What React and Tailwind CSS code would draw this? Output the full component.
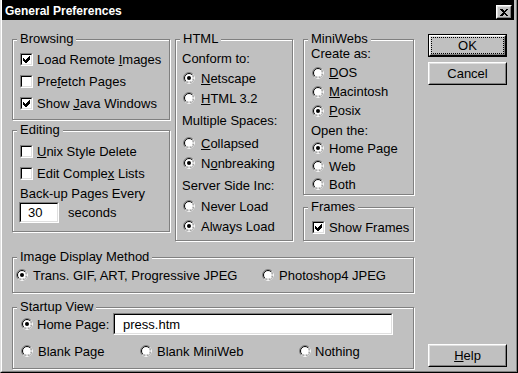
const Check = ({ checked }) => (
  <span className="flex h-[13px] w-[13px] shrink-0 border border-t-[#808080] border-l-[#808080] border-r-white border-b-white">
    <span className="flex h-full w-full items-center justify-center border border-t-black border-l-black border-r-[#dfdfdf] border-b-[#dfdfdf] bg-white">
      {checked && (
        <svg width="7" height="7" viewBox="0 0 7 7" shapeRendering="crispEdges">
          <polygon points="0,2 2,4 6,0 7,0 7,3 3,7 2,7 0,5" fill="#000" />
        </svg>
      )}
    </span>
  </span>
)

const Radio = ({ checked }) => (
  <svg width="12" height="12" viewBox="0 0 12 12" className="shrink-0">
    <circle cx="6" cy="6" r="5.5" fill="none" stroke="#808080" />
    <path d="M9.89 2.11A5.5 5.5 0 0 1 2.11 9.89" fill="none" stroke="#fff" />
    <circle cx="6" cy="6" r="4.5" fill="#fff" stroke="#000" />
    <path d="M9.18 2.82A4.5 4.5 0 0 1 2.82 9.18" fill="none" stroke="#dfdfdf" />
    {checked && <circle cx="6" cy="6" r="2" fill="#000" />}
  </svg>
)

const CheckRow = ({ checked, children, className = '' }) => (
  <div className={`flex items-center gap-[4px] ${className}`}>
    <Check checked={checked} />
    <span className="whitespace-nowrap">{children}</span>
  </div>
)

const RadioRow = ({ checked, children, className = '' }) => (
  <div className={`flex items-center ${className}`}>
    <Radio checked={checked} />
    <span className="whitespace-nowrap">{children}</span>
  </div>
)

function Group({ label, className = '', children }) {
  return (
    <div className={`relative border border-[#808080] shadow-[inset_1px_1px_0_#fff,1px_1px_0_#fff] ${className}`}>
      <span className="absolute -top-[9px] left-[4px] bg-[#c0c0c0] px-[3px] leading-[15px] whitespace-nowrap">
        {label}
      </span>
      {children}
    </div>
  )
}

const Sunken = ({ className = '', children }) => (
  <div className={`flex border border-t-[#808080] border-l-[#808080] border-r-white border-b-white ${className}`}>
    <div className="flex flex-1 items-center border border-t-black border-l-black border-r-[#dfdfdf] border-b-[#dfdfdf] bg-white">
      {children}
    </div>
  </div>
)

const Raised = ({ className = '', children }) => (
  <div className={`flex border border-t-white border-l-white border-r-black border-b-black bg-[#c0c0c0] ${className}`}>
    <div className="flex flex-1 items-center justify-center border border-t-[#dfdfdf] border-l-[#dfdfdf] border-r-[#808080] border-b-[#808080]">
      {children}
    </div>
  </div>
)

export default function App() {
  return (
    <div className="h-[373px] w-[518px] border-l border-r border-b border-l-[#dfdfdf] border-r-black border-b-black bg-[#c0c0c0] font-['Liberation_Sans',Arial,sans-serif] text-[13px] leading-[15px] text-black">
      <div className="h-full border-l border-r border-b border-l-white border-r-[#808080] border-b-[#808080] pr-[2px]">
        {/* title bar */}
        <div className="flex h-[20px] items-start justify-between bg-black pl-[3px]">
          <span className="mt-[4px] text-[12px] font-bold leading-[15px] text-white">General Preferences</span>
          <Raised className="mr-[2px] mt-[5px] h-[14px] w-[16px]">
            <svg width="8" height="7" viewBox="0 0 8 7" shapeRendering="crispEdges">
              <path d="M0 0h2l2 2 2-2h2L5 3.5 8 7H6L4 5 2 7H0l3-3.5z" fill="#000" />
            </svg>
          </Raised>
        </div>

        <div className="flex pl-[10px] pt-[14px]">
          {/* left area */}
          <div className="mt-[5px] flex w-[402px] flex-col">
            <div className="flex">
              <div className="flex w-[158px] flex-col">
                <Group label="Browsing" className="h-[81px] pl-[7px] pt-[8px]">
                  <CheckRow checked className="h-[22px]">Load Remote <u>I</u>mages</CheckRow>
                  <CheckRow className="h-[22px]">Pre<u>f</u>etch Pages</CheckRow>
                  <CheckRow checked className="h-[22px]">Show <u>J</u>ava Windows</CheckRow>
                </Group>
                <Group label="Editing" className="mt-[10px] h-[102px] pl-[7px] pt-[9px]">
                  <CheckRow className="h-[22px]"><u>U</u>nix Style Delete</CheckRow>
                  <CheckRow className="h-[22px]">Edit Comple<u>x</u> Lists</CheckRow>
                  <div className="flex h-[18px] items-center">Back-up Pages Every</div>
                  <div className="-ml-[1px] flex h-[21px] items-center">
                    <Sunken className="h-[21px] w-[40px]">
                      <span className="pl-[7px]">30</span>
                    </Sunken>
                    <span className="ml-[9px]">seconds</span>
                  </div>
                </Group>
              </div>

              <Group label="HTML" className="ml-[5px] h-[202px] w-[118px] pl-[6px] pt-[8px]">
                <div className="flex h-[20px] items-center">Conform to:</div>
                <RadioRow checked className="ml-[1px] h-[20px] gap-[6px]"><u>N</u>etscape</RadioRow>
                <RadioRow className="ml-[1px] h-[20px] gap-[6px]"><u>H</u>TML 3.2</RadioRow>
                <div className="mt-[2px] flex h-[20px] items-center">Multiple Spaces:</div>
                <RadioRow className="ml-[1px] mt-[3px] h-[20px] gap-[6px]"><u>C</u>ollapsed</RadioRow>
                <RadioRow checked className="ml-[1px] h-[20px] gap-[6px]">N<u>o</u>nbreaking</RadioRow>
                <div className="mt-[2px] flex h-[20px] items-center">Server Side Inc:</div>
                <RadioRow className="ml-[1px] mt-[1px] h-[20px] gap-[6px]">Never Load</RadioRow>
                <RadioRow checked className="ml-[1px] h-[20px] gap-[6px]">Always Load</RadioRow>
              </Group>

              <div className="ml-[10px] flex w-[111px] flex-col">
                <Group label="MiniWebs" className="h-[156px] pl-[7px] pt-[4px]">
                  <div className="flex h-[19px] items-center">Create as:</div>
                  <RadioRow className="ml-[1px] h-[19px] gap-[5px]"><u>D</u>OS</RadioRow>
                  <RadioRow className="ml-[1px] h-[19px] gap-[5px]"><u>M</u>acintosh</RadioRow>
                  <RadioRow checked className="ml-[1px] h-[19px] gap-[5px]"><u>P</u>osix</RadioRow>
                  <div className="mt-[1px] flex h-[18px] items-center">Open the:</div>
                  <RadioRow checked className="ml-[1px] h-[18px] gap-[5px]">Home Page</RadioRow>
                  <RadioRow className="ml-[1px] h-[18px] gap-[5px]">Web</RadioRow>
                  <RadioRow className="ml-[1px] h-[18px] gap-[5px]">Both</RadioRow>
                </Group>
                <Group label="Frames" className="mt-[12px] h-[34px] pl-[8px] pt-[8px]">
                  <CheckRow checked className="h-[22px]">Show Frames</CheckRow>
                </Group>
              </div>
            </div>

            <Group label="Image Display Method" className="mt-[16px] flex h-[36px] items-start pl-[3px] pt-[7px]">
              <RadioRow checked className="h-[20px] w-[246px] gap-[5px]">Trans. GIF, ART, Progressive JPEG</RadioRow>
              <RadioRow className="h-[20px] gap-[5px]">Photoshop4 JPEG</RadioRow>
            </Group>

            <Group label="Startup View" className="mt-[14px] h-[62px] pl-[8px] pt-[5px]">
              <div className="flex h-[22px] items-center">
                <RadioRow checked className="h-[22px] w-[92px] gap-[4px]">Home Page:</RadioRow>
                <Sunken className="h-[22px] w-[280px]">
                  <span className="pl-[8px]">press.htm</span>
                </Sunken>
              </div>
              <div className="mt-[6px] flex h-[20px] items-center">
                <RadioRow className="h-[20px] w-[119px] gap-[5px]">Blank Page</RadioRow>
                <RadioRow className="h-[20px] w-[159px] gap-[5px]">Blank MiniWeb</RadioRow>
                <RadioRow className="h-[20px] gap-[4px]">Nothing</RadioRow>
              </div>
            </Group>
          </div>

          {/* buttons */}
          <div className="ml-[14px] flex w-[79px] flex-col">
            <div className="flex h-[23px] border border-black">
              <Raised className="flex-1">
                <div className="flex h-full w-full items-center justify-center border border-dotted border-black">OK</div>
              </Raised>
            </div>
            <Raised className="mt-[5px] h-[23px]">Cancel</Raised>
            <Raised className="mt-[259px] h-[23px]"><span><u>H</u>elp</span></Raised>
          </div>
        </div>
      </div>
    </div>
  )
}
